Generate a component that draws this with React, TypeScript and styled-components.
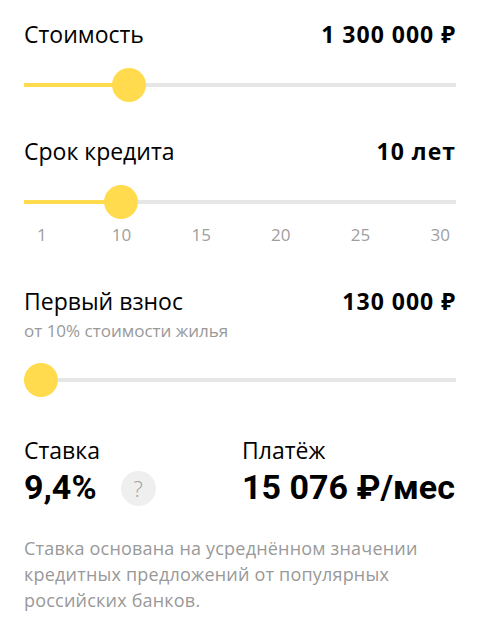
import styled, { createGlobalStyle } from 'styled-components';

const GlobalStyle = createGlobalStyle`
  body {
    margin: 0;
    background: #fff;
    font-family: "Open Sans", "Noto Sans", Arial, sans-serif;
    color: #000;
  }
`;

const THUMB = 34;

type SliderProps = { value: number };

function Slider({ value }: SliderProps) {
  const pos = `calc(${THUMB / 2}px + (100% - ${THUMB}px) * ${value})`;
  return (
    <SliderBox>
      <Track>
        <Fill style={{ width: pos }} />
      </Track>
      <Thumb style={{ left: `calc(${pos} - ${THUMB / 2}px)` }} />
    </SliderBox>
  );
}

export default function App() {
  return (
    <>
      <GlobalStyle />
      <Calculator>
        <Field>
          <Header>
            <Label>Стоимость</Label>
            <Value>1 300 000 ₽</Value>
          </Header>
          <Slider value={0.22} />
        </Field>

        <Field>
          <Header>
            <Label>Срок кредита</Label>
            <Value>10 лет</Value>
          </Header>
          <Slider value={0.2} />
          <Scale>
            {[1, 10, 15, 20, 25, 30].map((n) => (
              <Mark key={n}>{n}</Mark>
            ))}
          </Scale>
        </Field>

        <Field>
          <Header>
            <Label>Первый взнос</Label>
            <Value>130 000 ₽</Value>
          </Header>
          <Hint>от 10% стоимости жилья</Hint>
          <Slider value={0} />
        </Field>

        <Summary>
          <SummaryItem>
            <Label>Ставка</Label>
            <RateLine>
              <Big>9,4%</Big>
              <HelpButton>?</HelpButton>
            </RateLine>
          </SummaryItem>
          <SummaryItem>
            <Label>Платёж</Label>
            <Big>15 076 ₽/мес</Big>
          </SummaryItem>
        </Summary>

        <Note>
          Ставка основана на усреднённом значении кредитных предложений от
          популярных российских банков.
        </Note>
      </Calculator>
    </>
  );
}

const Calculator = styled.div`
  display: flex;
  flex-direction: column;
  padding: 19px 24px 24px;
`;
const Field = styled.section`
  display: flex;
  flex-direction: column;
  margin-bottom: 34px;
`;
const Header = styled.div`
  display: flex;
  justify-content: space-between;
  align-items: baseline;
`;
const Label = styled.div`
  font-size: 23px;
  line-height: 30px;
`;
const Value = styled.div`
  font-size: 23px;
  line-height: 30px;
  font-weight: 700;
  letter-spacing: 1px;
`;
const Hint = styled.div`
  font-size: 17px;
  line-height: 22px;
  color: #999;
  margin: 4px 0 2px;
`;
const SliderBox = styled.div`
  position: relative;
  height: ${THUMB}px;
  margin-top: 19px;
  display: flex;
  align-items: center;
`;
const Track = styled.div`
  width: 100%;
  height: 4px;
  background: #e6e6e6;
`;
const Fill = styled.div`
  height: 100%;
  background: #ffdb4d;
`;
const Thumb = styled.div`
  position: absolute;
  top: 0;
  width: ${THUMB}px;
  height: ${THUMB}px;
  border-radius: 50%;
  background: #ffdb4d;
`;
const Scale = styled.div`
  display: grid;
  grid-template-columns: repeat(6, 1fr);
  margin: 5px -24px 6px -22px;
`;
const Mark = styled.span`
  text-align: center;
  font-size: 17px;
  line-height: 22px;
  color: #9e9e9e;
`;
const Summary = styled.div`
  display: grid;
  grid-template-columns: 218px 1fr;
  margin-top: 4px;
`;
const SummaryItem = styled.div`
  display: flex;
  flex-direction: column;
`;
const RateLine = styled.div`
  display: flex;
  align-items: center;
  gap: 24px;
`;
const Big = styled.div`
  margin-top: 2px;
  font-family: Roboto, "Open Sans", Arial, sans-serif;
  font-size: 34px;
  line-height: 40px;
  font-weight: 700;
  white-space: nowrap;
`;
const HelpButton = styled.span`
  display: flex;
  align-items: center;
  justify-content: center;
  width: 35px;
  height: 35px;
  margin-top: 4px;
  border-radius: 50%;
  background: #efefef;
  color: #a0a0a0;
  font-size: 22px;
  font-weight: 300;
`;
const Note = styled.p`
  margin: 28px 0 0;
  font-size: 18px;
  line-height: 26px;
  letter-spacing: 0.2px;
  color: #999;
`;
